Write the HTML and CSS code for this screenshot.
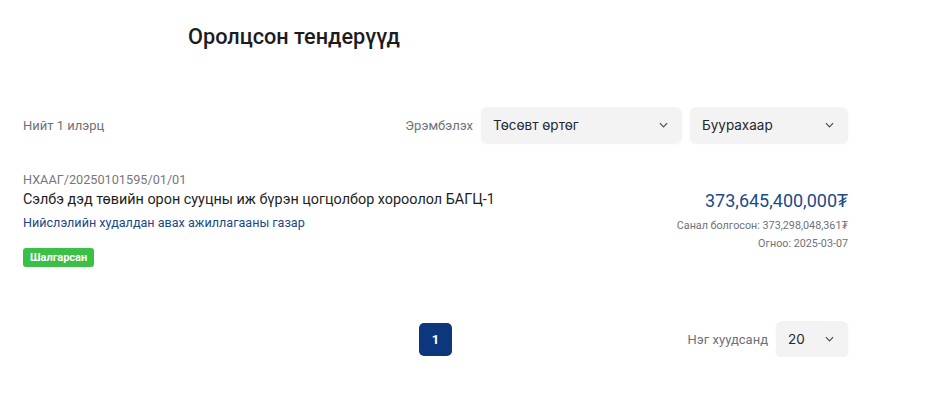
FILE: index.html
```html
<!DOCTYPE html>
<html lang="mn">
<head>
    <meta charset="UTF-8">
    <meta name="viewport" content="width=device-width, initial-scale=1.0">
    <title>Оролцсон тендерүүд</title>
    <link rel="stylesheet" href="styles.css">
</head>
<body>
    <div class="page">
        <h1 class="title">Оролцсон тендерүүд</h1>

        <div class="toolbar">
            <span class="muted">Нийт 1 илэрц</span>
            <div class="sort">
                <span class="muted">Эрэмбэлэх</span>
                <div class="select sel-wide">
                    <span>Төсөвт өртөг</span>
                    <svg class="chev" viewBox="0 0 10 6"><path d="M1 1l4 4 4-4"/></svg>
                </div>
                <div class="select sel-dir">
                    <span>Буурахаар</span>
                    <svg class="chev" viewBox="0 0 10 6"><path d="M1 1l4 4 4-4"/></svg>
                </div>
            </div>
        </div>

        <div class="tender">
            <div class="tender-info">
                <div class="code">НХААГ/20250101595/01/01</div>
                <div class="name">Сэлбэ дэд төвийн орон сууцны иж бүрэн цогцолбор хороолол БАГЦ-1</div>
                <a class="org" href="#">Нийслэлийн худалдан авах ажиллагааны газар</a>
                <span class="badge">Шалгарсан</span>
            </div>
            <div class="tender-money">
                <div class="price">373,645,400,000₮</div>
                <div class="small first">Санал болгосон: 373,298,048,361₮</div>
                <div class="small">Огноо: 2025-03-07</div>
            </div>
        </div>

        <div class="pager">
            <div class="pages">
                <button class="page-btn active">1</button>
            </div>
            <div class="per-page">
                <span class="muted">Нэг хуудсанд</span>
                <div class="select sel-num">
                    <span>20</span>
                    <svg class="chev" viewBox="0 0 10 6"><path d="M1 1l4 4 4-4"/></svg>
                </div>
            </div>
        </div>
    </div>
</body>
</html>
```

FILE: styles.css
```css
body { margin: 0; background: #fff; font-family: Roboto, "Liberation Sans", sans-serif; color: #222; }
.page { width: 825px; padding: 0 0 0 23px; }
.title { margin: 0; padding: 24px 0 0 165px; height: 40px; font-size: 21.7px; font-weight: 500; color: #1b1c1f; }
.muted { font-size: 13px; color: #6f7177; }

.toolbar { display: flex; justify-content: space-between; align-items: center; margin-top: 43px; }
.sort { display: flex; align-items: center; gap: 8px; }
.select { display: flex; align-items: center; justify-content: space-between; height: 36px; box-sizing: border-box; padding: 0 14px 0 12px; background: #f3f3f4; border-radius: 6px; box-shadow: 0 1px 2px rgba(0,0,0,0.06); font-family: Inter, Roboto, sans-serif; font-size: 13.5px; color: #23262e; }
.sel-wide { width: 201px; }
.sel-dir { width: 158px; }
.sel-num { width: 72px; }
.chev { width: 9px; height: 6px; fill: none; stroke: #4a4d55; stroke-width: 1.3; }

.tender { display: flex; justify-content: space-between; margin-top: 28px; }
.tender-info { display: flex; flex-direction: column; align-items: flex-start; }
.code { font-size: 12.7px; color: #75777c; line-height: 16px; padding-top: 1px; }
.name { font-size: 14.4px; color: #1d1e21; line-height: 20px; margin-top: 2px; }
.org { font-size: 12.6px; color: #1c4788; text-decoration: none; line-height: 18px; margin-top: 4px; }
.badge { margin-top: 16px; background: #3cbf46; color: #fff; font-size: 11px; font-weight: 700; padding: 2px 7px; border-radius: 3px; line-height: 15px; }
.tender-money { text-align: right; padding-top: 19px; }
.price { font-size: 18px; color: #1d4a8a; line-height: 22px; }
.small { font-size: 10.75px; color: #6f7177; line-height: 18px; }
.small.first { margin-top: 5px; }

.pager { display: flex; justify-content: space-between; align-items: center; margin-top: 54px; }
.pages { padding-left: 396px; }
.page-btn { width: 33px; height: 33px; border: none; border-radius: 5px; background: #0c377c; color: #fff; font-family: Roboto, sans-serif; font-size: 13px; font-weight: 700; }
.per-page { display: flex; align-items: center; gap: 8px; }
```
